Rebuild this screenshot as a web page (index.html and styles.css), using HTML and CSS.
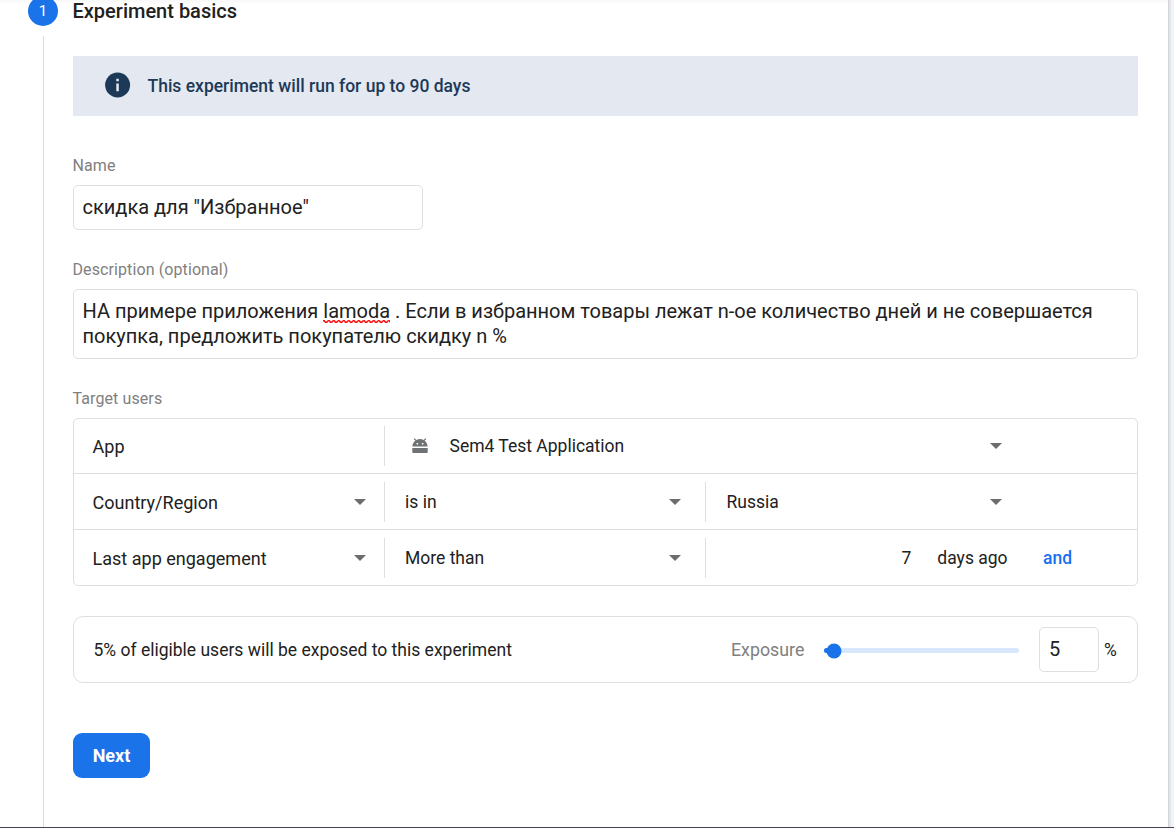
FILE: index.html
```html
<!DOCTYPE html>
<html lang="en">
<head>
<meta charset="utf-8">
<title>Experiment basics</title>
<link rel="stylesheet" href="styles.css">
</head>
<body>
<div class="page">
  <main class="card">
    <div class="rail">
      <div class="step-number">1</div>
      <div class="rail-line"></div>
    </div>
    <section class="content">
      <h1 class="title"><span>Experiment basics</span></h1>
      <div class="banner">
        <svg class="info" viewBox="0 0 26 26"><circle cx="12.600" cy="13" r="12.500" fill="#1c3a57"/><path d="M11.300 6.8h2.5v2.5h-2.5zM11.300 11.4h2.5v7.8h-2.5z" fill="#e4e8f0"/></svg>
        <span class="banner-text">This experiment will run for up to 90 days</span>
      </div>

      <div class="label label-name"><span>Name</span></div>
      <div class="field field-name"><span class="t-name">скидка для "Избранное"</span></div>

      <div class="label label-desc"><span>Description (optional)</span></div>
      <div class="field field-desc">
        <div class="t-desc1">НА примере приложения <span class="misspelled">lamoda</span> . Если в избранном товары лежат n-ое количество дней и не совершается</div>
        <div class="t-desc2">покупка, предложить покупателю скидку n %</div>
      </div>

      <div class="label label-target"><span>Target users</span></div>
      <div class="targets">
        <div class="row">
          <div class="cell first"><span class="low">App</span></div>
          <div class="cell app">
            <svg class="android" viewBox="0 0 16 16"><path d="M.3 9.9h15.4v4a1.2 1.2 0 0 1-1.2 1.2h-13A1.2 1.2 0 0 1 .3 13.900z" fill="#707376"/><path fill-rule="evenodd" d="M1.700.9 2.500.2 4.400 2.100A7 7 0 0 1 11.600 2.100L13.500.2l.8.700-1.700 1.900c1.900 1.300 2.900 3.200 3 5.800H.4c.1-2.600 1.100-4.500 3-5.800zM4.600 5v1.500h1.500V5zm5.300 0v1.500h1.500V5z" fill="#707376"/></svg>
            <span>Sem4 Test Application</span>
            <svg class="arrow" viewBox="0 0 12 6"><path d="M0 0h12L6 6z" fill="#6d6d6d"/></svg>
          </div>
        </div>
        <div class="row">
          <div class="cell first"><span class="low">Country/Region</span><svg class="arrow" viewBox="0 0 12 6"><path d="M0 0h12L6 6z" fill="#6d6d6d"/></svg></div>
          <div class="cell second"><span>is in</span><svg class="arrow" viewBox="0 0 12 6"><path d="M0 0h12L6 6z" fill="#6d6d6d"/></svg></div>
          <div class="cell third"><span>Russia</span><svg class="arrow" viewBox="0 0 12 6"><path d="M0 0h12L6 6z" fill="#6d6d6d"/></svg></div>
        </div>
        <div class="row">
          <div class="cell first"><span class="low">Last app engagement</span><svg class="arrow" viewBox="0 0 12 6"><path d="M0 0h12L6 6z" fill="#6d6d6d"/></svg></div>
          <div class="cell second"><span>More than</span><svg class="arrow" viewBox="0 0 12 6"><path d="M0 0h12L6 6z" fill="#6d6d6d"/></svg></div>
          <div class="cell days"><span class="num">7</span><span class="ago">days ago</span><span class="and">and</span></div>
        </div>
      </div>

      <div class="exposure">
        <span class="summary">5% of eligible users will be exposed to this experiment</span>
        <span class="exp-label">Exposure</span>
        <svg class="slider" viewBox="0 0 196 18"><rect x="0" y="7" width="195" height="5" rx="2.500" fill="#d9e7fd"/><path d="M10 7H2.500a2.500 2.500 0 0 0 0 5H10z" fill="#1a73e8"/><circle cx="10" cy="10" r="7.500" fill="#1a73e8"/></svg>
        <div class="exp-input"><span>5</span></div>
        <span class="percent">%</span>
      </div>

      <button class="next">Next</button>
    </section>
  </main>
</div>
</body>
</html>
```
FILE: styles.css
```css
* { box-sizing: border-box; }
body { margin: 0; font-family: Roboto, "Noto Sans", sans-serif; color: #212121; background: #f1f3f5; overflow: hidden; }
.page { height: 828px; border-bottom: 1px solid #45424f; }
.card { display: flex; width: 1169px; height: 827px; padding-left: 28px; background: linear-gradient(#f8f8f8, #fff 4px); border-right: 1px solid #d3d5d8; box-shadow: 1px 0 2px rgba(60, 64, 67, .15); overflow: hidden; }
.rail { width: 45px; flex: none; display: flex; flex-direction: column; }
.step-number { width: 30px; height: 30px; margin-top: -4px; border-radius: 50%; background: #1a73e8; color: #fff; font-size: 15px; line-height: 30px; text-align: center; flex: none; }
.rail-line { flex: 1; width: 1px; margin: 10px 0 0 15px; background: #dcdcdf; }
.content { width: 1065px; flex: none; display: flex; flex-direction: column; align-items: flex-start; white-space: nowrap; }
.title { margin: 0 0 0 -.5px; height: 56px; font-size: 20px; font-weight: 500; line-height: 23px; }
.banner { width: 100%; height: 60px; display: flex; align-items: center; padding-left: 32px; background: #e4e8f0; color: #1c3a57; font-size: 17.5px; font-weight: 500; }
.info { width: 26px; height: 26px; margin: -2px 16.5px 0 0; }
.label { height: 20px; line-height: 20px; margin-left: -.5px; font-size: 16px; color: #80807f; letter-spacing: .1px; }
.label-name { margin-top: 40px; }
.label-desc { margin-top: 30px; }
.label-target { margin-top: 30px; }
.field { border: 1px solid #dfdfdf; border-radius: 5px; background: #fff; font-size: 20px; }
.field-name { width: 350px; height: 45px; margin-top: 9px; padding-left: 8.5px; line-height: 43px; }
.field-desc { width: 1065px; height: 70px; margin-top: 9px; padding: 9px 0 0 8.5px; line-height: 25px; }
.t-desc1 { letter-spacing: -.003px; }
.misspelled { background: url("data:image/svg+xml,%3Csvg xmlns='http://www.w3.org/2000/svg' width='5' height='3'%3E%3Cpath d='M0 .8 1.250 .8 2.500 2.200 3.750 2.200 5 .8' fill='none' stroke='%23ff1010' stroke-width='1.600'/%3E%3C/svg%3E") repeat-x left bottom; }
.targets { width: 1065px; height: 168px; margin-top: 9px; border: 1px solid #dfdfdf; border-radius: 5px; font-size: 17.5px; }
.row { height: 56px; display: flex; align-items: center; border-bottom: 1px solid #dfdfdf; }
.row:first-child { height: 55px; }
.row:last-child { height: 55px; border-bottom: 0; }
.cell { height: 40px; display: flex; align-items: center; justify-content: space-between; }
.cell.first { width: 311px; padding: 0 18px 0 18.5px; border-right: 1px solid #dfdfdf; font-size: 18.05px; }
.cell.second { width: 321px; padding: 0 24px 0 20px; border-right: 1px solid #dfdfdf; }
.cell.third { width: 318px; padding: 0 22px 0 20.5px; }
.cell.app { width: 638px; padding: 0 21px 0 27px; }
.row:first-child .app { padding-bottom: 1px; }
.row:first-child .first { padding-bottom: 1px; }
.cell.app span { margin: 0 auto 0 21.5px; }
.low { position: relative; top: 1px; }
.arrow { width: 12px; height: 6px; flex: none; }
.android { width: 16px; height: 16px; }
.cell.days { justify-content: flex-start; padding-left: 195.5px; }
.ago { margin-left: 26px; }
.and { margin-left: 35.5px; color: #1a6ff2; font-weight: 500; }
.exposure { width: 1065px; height: 67px; margin-top: 30px; display: flex; align-items: center; border: 1px solid #dfdfdf; border-radius: 10px; padding-left: 19.5px; font-size: 17.5px; }
.summary { width: 637.5px; }
.exp-label { width: 93px; color: #80807f; font-size: 17.8px; }
.slider { width: 196px; height: 18px; margin: 0 19px 0 0; flex: none; }
.exp-input { width: 60px; height: 45px; border: 1px solid #dfdfdf; border-radius: 5px; padding-left: 9px; font-size: 20px; line-height: 43px; }
.percent { margin-left: 5px; font-size: 17.5px; }
.next { width: 77px; height: 45px; margin-top: 50px; padding: 0; border: 0; border-radius: 9px; background: #1a73e8; color: #fff; font: 700 18px Roboto, sans-serif; }
```
